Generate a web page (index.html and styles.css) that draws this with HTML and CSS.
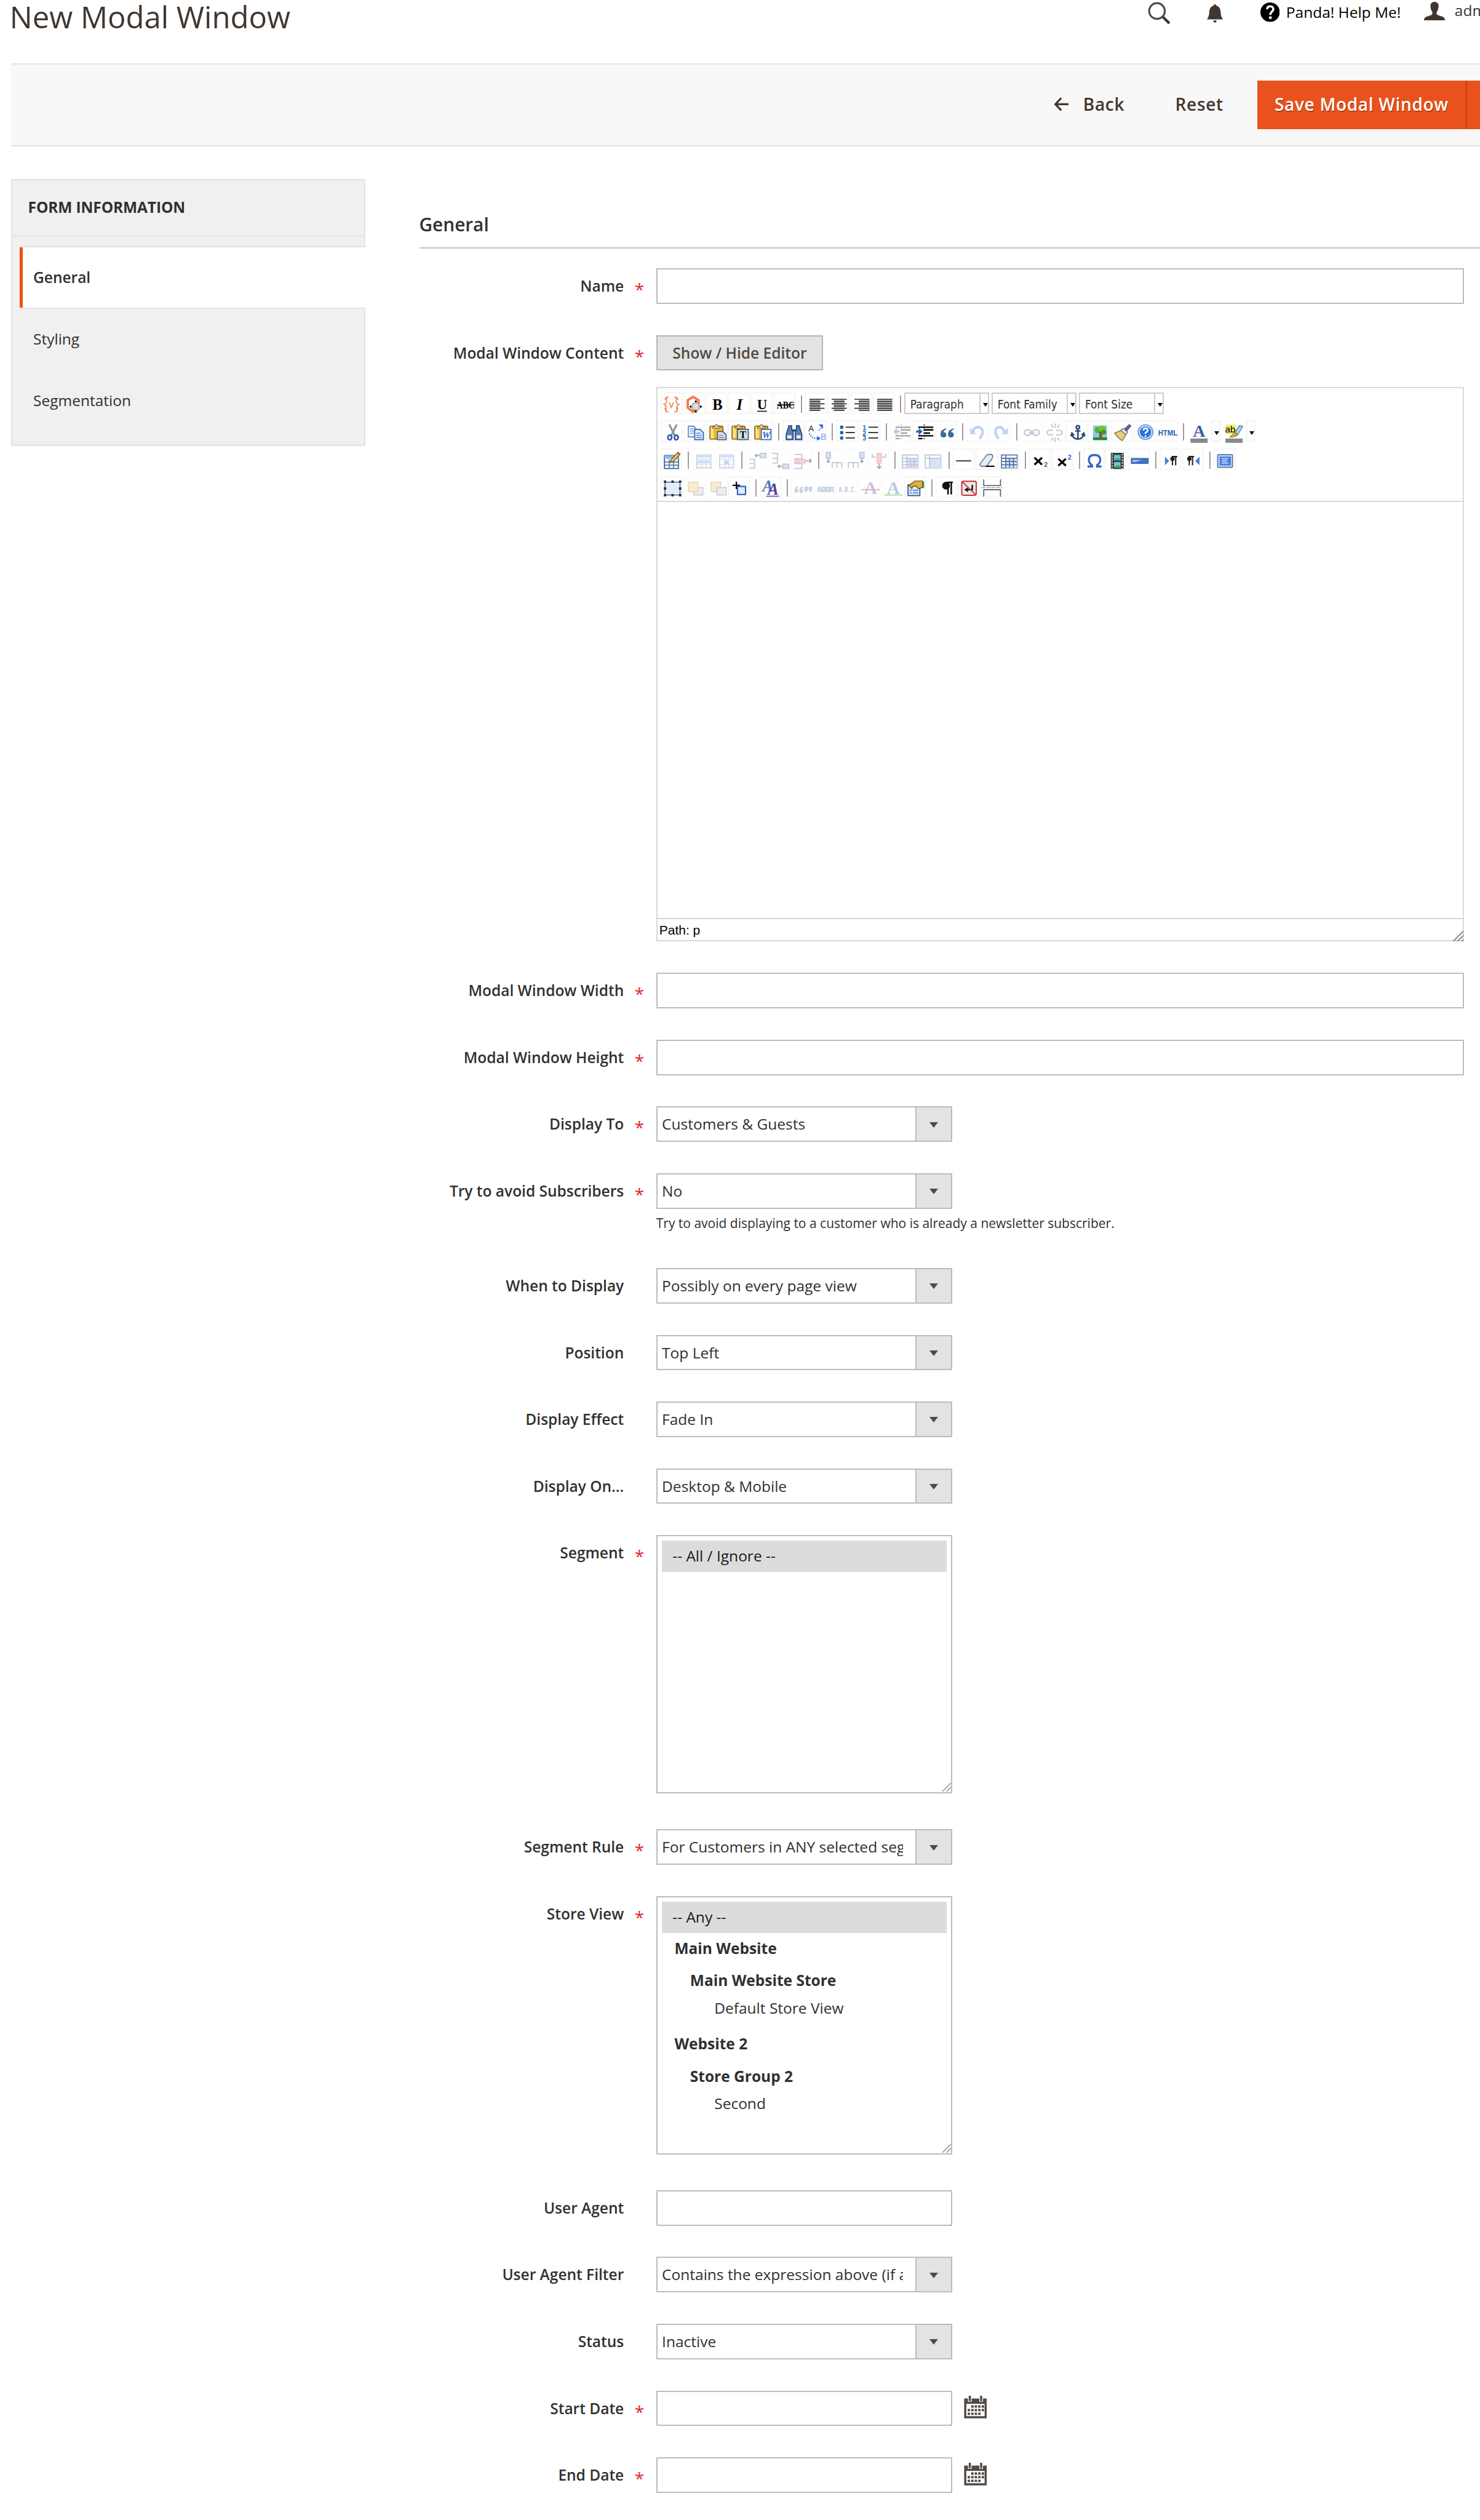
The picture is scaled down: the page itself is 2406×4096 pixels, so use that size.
FILE: index.html
```html
<!DOCTYPE html>
<html lang="en">
<head>
    <meta charset="UTF-8">
    <meta name="viewport" content="width=device-width, initial-scale=1.0">
    <title>New Modal Window</title>
    <link rel="stylesheet" href="styles.css">
</head>
<body>
    <header class="page-header">
        <h1 class="page-title">New Modal Window</h1>
        <div class="header-tools">
            <svg class="ico-search" viewBox="0 0 42 42"><circle cx="17" cy="17" r="14.500" fill="none" stroke="#514943" stroke-width="3.600"/><path d="M28 28l12 12" stroke="#41362f" stroke-width="5"/></svg>
            <svg class="ico-bell" viewBox="0 0 30 34"><path d="M15 0c1.500 0 2.300 1 2.300 2.300C23 4 25 8 25.500 14c.5 7 1.500 10 4.500 14H0c3-4 4-7 4.500-14C5 8 7 4 12.700 2.300 12.700 1 13.500 0 15 0zM12 30h6c0 2-1 4-3 4s-3-2-3-4z" fill="#41362f"/></svg>
            <svg class="ico-help" viewBox="0 0 36 36"><circle cx="18" cy="18" r="18"/><path d="M12.500 12.500C12.500 8.500 15 7 18 7s6 2 6 5.500c0 4.500-5.700 4.500-5.700 10.500" fill="none" stroke="#fff" stroke-width="4"/><rect x="16" y="26" width="5" height="4.500" fill="#fff"/></svg>
            <a class="help-link">Panda! Help Me!</a>
            <svg class="ico-user" viewBox="0 0 39 35"><path d="M19.500 0c5.500 0 8 4 7.500 9-.4 5-2 8-3.500 10v3c0 2 3 3 8 4.500 5 1.500 7.500 3 7.500 8.500H0c0-5.500 2.500-7 7.500-8.500 5-1.500 8-2.500 8-4.500v-3C14 17 12.400 14 12 9c-.5-5 2-9 7.500-9z" fill="#41362f"/></svg>
            <a class="user-link">adm</a>
        </div>
    </header>

    <div class="page-actions">
        <button class="action back" type="button">
            <svg viewBox="0 0 28 26"><path d="M14 1.500L3 13l11 11.500M3 13h25" fill="none" stroke="#41362f" stroke-width="3.600"/></svg>
            <span>Back</span>
        </button>
        <button class="action reset" type="button">Reset</button>
        <button class="action save" type="button">Save Modal Window</button>
        <button class="action toggle" type="button"></button>
    </div>

    <div class="page-columns">
        <nav class="page-nav">
            <strong class="nav-title">FORM INFORMATION</strong>
            <ul class="nav-items">
                <li class="nav-item active">General</li>
                <li class="nav-item">Styling</li>
                <li class="nav-item">Segmentation</li>
            </ul>
        </nav>

        <form class="main-form">
            <h2 class="legend">General</h2>

            <div class="field required">
                <label class="label">Name</label>
                <div class="control"><input class="text wide" type="text"></div>
            </div>

            <div class="field required">
                <label class="label">Modal Window Content</label>
                <div class="control">
                    <button class="toggle-editor" type="button">Show / Hide Editor</button>
                    <div class="editor">
                        <div class="toolbar">
                            <div class="tools">
                                <svg class="btn" viewBox="0 0 20 20"><path d="M7.500 4Q5 4 5.500 7T3 11q2.500 1 2 4t2.500 3M12.500 4q2.500 0 2 3t2.500 4q-2.500 1-2 4t-2.500 3M5 4L4 7M15 4l1 3M4 14l1 4M16 14l-1 4M8 9l2 5 2-5" fill="none" stroke="#f58350" stroke-width="1"/></svg>
                                <svg class="btn" viewBox="0 0 20 20"><path d="M4 14V7l5-3 5 3v7l-5 4z" fill="none" stroke="#f47b50" stroke-width="2.200"/><path d="M8.500 10h6v6h-6z" fill="#ddd" stroke="#888" stroke-width=".6"/><path d="M11.500 7l1.500 2h-3zM11.500 19l1.500-2h-3zM5.500 13l2-1.500v3zM17.500 13l-2-1.500v3z"/></svg>
                                <svg class="btn" viewBox="0 0 20 20"><text x="10.500" y="16" class="serif" font-size="14" font-weight="bold">B</text></svg>
                                <svg class="btn" viewBox="0 0 20 20"><text x="10.500" y="16" class="serif" font-size="14" font-weight="bold" font-style="italic">I</text></svg>
                                <svg class="btn" viewBox="0 0 20 20"><text x="10.300" y="15.500" class="serif" font-size="13" font-weight="bold">U</text><path d="M5.700 17.400h9" stroke="#222"/></svg>
                                <svg class="btn" viewBox="0 0 20 20"><text x="11" y="15" class="serif" font-size="10" font-weight="bold" textLength="16.500" lengthAdjust="spacingAndGlyphs">ABC</text><path d="M3 11.500h16" stroke="#000" stroke-width=".9"/></svg>
                                <i class="sep"></i>
                                <svg class="btn" viewBox="0 0 20 20"><path d="M4 6h10v11H4z" fill="#bbb"/><path d="M4 6.300h14M4 8.400h10M4 10.500h14M4 12.500h10M4 14.600h14M4 16.700h10" stroke="#333" stroke-width=".95"/></svg>
                                <svg class="btn" viewBox="0 0 20 20"><path d="M6 6h10v11H6z" fill="#bbb"/><path d="M4 6.300h14M6 8.400h10M4 10.500h14M6 12.500h10M4 14.600h14M6 16.700h10" stroke="#333" stroke-width=".95"/></svg>
                                <svg class="btn" viewBox="0 0 20 20"><path d="M8 6h10v11H8z" fill="#bbb"/><path d="M4 6.300h14M8 8.400h10M4 10.500h14M8 12.500h10M4 14.600h14M8 16.700h10" stroke="#333" stroke-width=".95"/></svg>
                                <svg class="btn" viewBox="0 0 20 20"><path d="M4 6h14v11H4z" fill="#bbb"/><path d="M4 6.300h14M4 8.400h14M4 10.500h14M4 12.500h14M4 14.600h14M4 16.700h14" stroke="#333" stroke-width=".95"/></svg>
                                <i class="sep"></i>
                                <div class="list">Paragraph</div>
                                <div class="list">Font Family</div>
                                <div class="list">Font Size</div>
                            </div>

                            <div class="tools">
                                <svg class="btn" viewBox="0 0 20 20"><path d="M8 4l5 10M15 4l-5 10" stroke="#8a96a3" stroke-width="1.800"/><ellipse cx="8.500" cy="16" rx="1.800" ry="2.200" fill="none" stroke="#1f56a8" stroke-width="1.400"/><ellipse cx="14.500" cy="16" rx="1.800" ry="2.200" fill="none" stroke="#1f56a8" stroke-width="1.400"/></svg>
                                <svg class="btn" viewBox="0 0 20 20"><path d="M4.500 5.500h5l2 2v8h-7z" fill="#eaf2fc" stroke="#5f86b8" stroke-width=".9"/><path d="M6 8h4M6 10h4M6 12h4" stroke="#8fb2e0"/><path d="M10.500 8.500h5l3 3V18h-8z" fill="#dfeafa" stroke="#3564a8"/><path d="M12 12h4M12 14h5M12 16h5" stroke="#6d9be0"/></svg>
                                <svg class="btn" viewBox="0 0 20 20"><rect x="3.500" y="5.500" width="12" height="12" rx="1" fill="#e8b93a" stroke="#8a6418"/><path d="M4 6h3v11H4z" fill="#fbe27a"/><path d="M6 7.500h7V6h-2q-.5-2-1.500-2T8 6H6z" fill="#ead9a0" stroke="#8a6418" stroke-width=".7"/><path d="M10.500 10.500h5l3 3V18h-8z" fill="#dbe3ea" stroke="#4b5e70"/><path d="M12 14h4M12 16h5" stroke="#8b99a8"/></svg>
                                <svg class="btn" viewBox="0 0 20 20"><rect x="3.500" y="5.500" width="12" height="12" rx="1" fill="#e8b93a" stroke="#8a6418"/><path d="M4 6h3v11H4z" fill="#fbe27a"/><path d="M6 7.500h7V6h-2q-.5-2-1.500-2T8 6H6z" fill="#ead9a0" stroke="#8a6418" stroke-width=".7"/><rect x="8.500" y="8.500" width="10" height="9.500" fill="#d5e0ea" stroke="#4b5e70"/><text x="13.500" y="16.700" class="serif" font-size="9" font-weight="bold">T</text></svg>
                                <svg class="btn" viewBox="0 0 20 20"><rect x="3.500" y="5.500" width="12" height="12" rx="1" fill="#e8b93a" stroke="#8a6418"/><path d="M4 6h3v11H4z" fill="#fbe27a"/><path d="M6 7.500h7V6h-2q-.5-2-1.500-2T8 6H6z" fill="#ead9a0" stroke="#8a6418" stroke-width=".7"/><rect x="9.500" y="8.500" width="9" height="9.500" fill="#fff" stroke="#3d6fb5"/><text x="14" y="16.500" class="serif blue" font-size="8.500" font-weight="bold" font-style="italic">W</text></svg>
                                <i class="sep"></i>
                                <svg class="btn" viewBox="0 0 20 20"><path d="M6 5h2.500v3l1.500 3v7H3.500v-5zM13 5h2.500l2.500 8v5h-6v-7l1-3z" fill="#5b7fb5" stroke="#274a80"/><path d="M4.500 14h4v3h-4zM13 14h4v3h-4z" fill="#e4ecf7"/><path d="M9 9.500h4" stroke="#274a80" stroke-width="2"/></svg>
                                <svg class="btn" viewBox="0 0 20 20"><text x="5.500" y="10" class="sans" font-size="7.500">A</text><text x="17" y="18.500" class="sans" font-size="8" fill="#7d96f0">B</text><path d="M4 12q1 5 8 5" fill="none" stroke="#3a6fe0" stroke-width="1.200" stroke-dasharray="1.200 1"/><path d="M11 14.500l3.500 2.300-3.500 2.200zM12.500 4h4v4z" fill="#2a62e8"/><path d="M15 7l-3 3" stroke="#3a6fe0" stroke-dasharray="1.200 1"/></svg>
                                <i class="sep"></i>
                                <svg class="btn" viewBox="0 0 20 20"><path d="M9 6.500h8.500M9 11.500h8.500M9 16.500h8.500" stroke="#222" stroke-width="1.100"/><g fill="#2b5fa8"><circle cx="5.300" cy="6.500" r="1.600"/><circle cx="5.300" cy="11.500" r="1.600"/><circle cx="5.300" cy="16.500" r="1.600"/></g></svg>
                                <svg class="btn" viewBox="0 0 20 20"><path d="M9 6.500h9M9 11.500h9M9 16.500h9" stroke="#222" stroke-width="1.100"/><g class="sans nums" font-size="6" font-weight="bold"><text x="5.300" y="9">1</text><text x="5.300" y="14">2</text><text x="5.300" y="19">3</text></g></svg>
                                <i class="sep"></i>
                                <svg class="btn dim" viewBox="0 0 20 20"><path d="M5 6.500h14M10 9h9M10 12h6M5 14.500h14M5 17h4" stroke="#000" stroke-width="1.300"/><path d="M10.500 4v15" stroke="#000" stroke-dasharray="1 1.500"/><path d="M3 10.500L6.500 7v2.500H9v2H6.500V14z" fill="#2a62e8"/></svg>
                                <svg class="btn" viewBox="0 0 20 20"><path d="M5 6.500h14M10 9h9M10 12h6M5 14.500h14M5 17h4" stroke="#000" stroke-width="1.300"/><path d="M10.500 4v15" stroke="#000" stroke-dasharray="1 1.500"/><path d="M9 10.500L5.500 7v2.500H3v2h2.500V14z" fill="#2f62b8"/></svg>
                                <svg class="btn" viewBox="0 0 20 20"><path d="M10 7.500Q4.500 8.500 4.500 13q0 3 2.700 3t2.700-2.500q0-2.300-2.500-2.500.2-1.800 2.600-2.500zM17 7.500q-5.500 1-5.500 5.500 0 3 2.700 3t2.700-2.500q0-2.300-2.500-2.500.2-1.800 2.600-2.500z" fill="#41689f"/></svg>
                                <i class="sep"></i>
                                <svg class="btn dim" viewBox="0 0 20 20"><path d="M6 11q1-5 5-4.500 5 .8 4 5.500-.7 3-3 5" fill="none" stroke="#4f7fd8" stroke-width="2.400"/><path d="M3.500 7v6h6z" fill="#4f7fd8"/></svg>
                                <svg class="btn dim" viewBox="0 0 20 20"><path d="M14 11q-1-5-5-4.500-4 .8-3 5.500.7 3 3 5" fill="none" stroke="#4f7fd8" stroke-width="2.400"/><path d="M17.500 7v6h-6z" fill="#4f7fd8"/></svg>
                                <i class="sep"></i>
                                <svg class="btn dim" viewBox="0 0 20 20"><g fill="none" stroke="#55698a" stroke-width="1.400"><rect x="3.500" y="9" width="6.500" height="5" rx="2.500"/><rect x="11" y="9" width="6.500" height="5" rx="2.500"/><path d="M8 11.500h5"/></g></svg>
                                <svg class="btn dim" viewBox="0 0 20 20"><path d="M9 9.500Q3.500 8.500 3.500 11.500T9 13.500M12 9.500q5.500-1 5.500 2t-5.500 2M11 3v4M7.500 4L9 7M15 4l-2 3M11 20v-4M7.500 19L9 16M15 19l-2-3" fill="none" stroke="#55698a" stroke-width="1.200"/></svg>
                                <svg class="btn" viewBox="0 0 20 20"><g fill="none" stroke="#2f4f7c" stroke-width="1.500"><circle cx="11" cy="6.500" r="1.500"/><path d="M11 8v9.500M8.500 10h5M5.500 12.500q.5 5 5.500 5t5.500-5M4.500 15l1-3 2 2M17.500 15l-1-3-2 2"/></g></svg>
                                <svg class="btn" viewBox="0 0 20 20"><rect x="4.500" y="5" width="13" height="13" fill="#8cc4ef"/><path d="M4.500 16h13v2.500h-13z" fill="#1e8a2a"/><path d="M10 17l1-4-3-3 3 1 1-2 .5 3 2.500-2-2 4v3z" fill="#8a5a28"/><circle cx="9" cy="9" r="3" fill="#59b52a"/><circle cx="13" cy="8" r="3.200" fill="#6cc732"/><circle cx="14.500" cy="11" r="2.300" fill="#3f9b22"/><path d="M11 10v7" stroke="#7d4a1c"/></svg>
                                <svg class="btn" viewBox="0 0 20 20"><path d="M3.500 12l6-2.500 4.500 4L10.500 19Q7 17 3.500 12z" fill="#e9cf78" stroke="#8f7330" stroke-width=".8"/><path d="M9 9.500l3-2 3.500 3.500-1.500 2.500z" fill="#ddd" stroke="#667" stroke-width=".7"/><path d="M13 8l4-4 1.500 1.500-4 4.500z" fill="#5b6fc0" stroke="#39457f" stroke-width=".7"/></svg>
                                <svg class="btn" viewBox="0 0 20 20"><circle cx="11" cy="11" r="7" fill="#2f6fe0" stroke="#8fb1e8" stroke-width="1"/><circle cx="11" cy="11" r="5.700" fill="none" stroke="#fff" stroke-width=".8"/><path d="M9 9.500q0-2 2-2t2 1.800q0 1.200-2 2.400v1M11 14v1.400" fill="none" stroke="#fff" stroke-width="1.500"/></svg>
                                <svg class="btn" viewBox="0 0 20 20"><text x="10.500" y="14.500" class="sans blue" font-size="7.500" font-weight="bold" textLength="18" lengthAdjust="spacingAndGlyphs">HTML</text></svg>
                                <i class="sep"></i>
                                <svg class="btn tall" viewBox="0 0 20 23"><text x="11" y="15.500" class="serif" font-size="16" font-weight="bold" fill="#3a5f9c">A</text><path d="M3 17h16v4H3z" fill="#888"/></svg>
                                <span class="drop"></span>
                                <svg class="btn tall" viewBox="0 0 20 23"><path d="M3 4h9.500v9H3z" fill="#f5ec6b"/><text x="7.500" y="11.500" class="sans" font-size="8.500">ab</text><path d="M12 11l4-6 3 1-5 8z" fill="#b9d0ee" stroke="#5476a8" stroke-width=".8"/><path d="M7 15.500l5-4 2 2q-2 2.500-7 2z" fill="#d8bb55" stroke="#7d6a2a" stroke-width=".6"/><path d="M3 17h16v4H3z" fill="#888"/></svg>
                                <span class="drop"></span>
                            </div>

                            <div class="tools">
                                <svg class="btn" viewBox="0 0 20 20"><rect x="3.500" y="6.500" width="13" height="12" fill="#fff" stroke="#3f6299"/><path d="M3.500 6.500h13v3h-13z" fill="#8fb5ee"/><path d="M4 12.500h12M4 15.500h12M8 10v8M12 10v8" stroke="#5b7db0"/><path d="M9 13l1-3 6-6.500 2 2-6 6.500z" fill="#f0c860" stroke="#5a3f1a" stroke-width=".7"/><path d="M15 4.500L16.500 3l2 2-1.500 1.500z" fill="#d9605a"/></svg>
                                <i class="sep"></i>
                                <svg class="btn dim" viewBox="0 0 20 20"><rect x="4.500" y="6" width="13" height="12" fill="#fff" stroke="#5b7db0"/><path d="M4.500 5.500h13v3h-13z" fill="#7da7ea"/><path d="M4.500 11h13v3h-13z" fill="#7da7ea"/><path d="M5 10h12M5 15h12M9 9v9M13 9v9" stroke="#7f99c2" stroke-width=".7"/></svg>
                                <svg class="btn dim" viewBox="0 0 20 20"><rect x="4.500" y="6" width="13" height="12" fill="#fff" stroke="#5b7db0"/><path d="M4.500 5.500h13v3h-13z" fill="#7da7ea"/><path d="M8.500 11h4.500v3.500H8.500z" fill="#4d86e0"/><path d="M5 10h12M5 15h12M9 9v9M13 9v9" stroke="#7f99c2" stroke-width=".7"/></svg>
                                <i class="sep"></i>
                                <svg class="btn dim" viewBox="0 0 20 20"><path d="M3.500 10h5v4h-5M3.500 14h5v4h-5" fill="none" stroke="#4a6288"/><rect x="13.500" y="4.500" width="5.500" height="4" fill="#8fb2ee" stroke="#4a6288"/><path d="M9 6.500h4M10.500 5L9 6.500 10.500 8" fill="none" stroke="#000"/></svg>
                                <svg class="btn dim" viewBox="0 0 20 20"><path d="M3.500 4.500h5v4.500h-5M3.500 9h5v4.500h-5" fill="none" stroke="#4a6288"/><rect x="13.500" y="14.500" width="5.500" height="4" fill="#8fb2ee" stroke="#4a6288"/><path d="M9 16.500h4M10.500 15L9 16.500l1.500 1.500" fill="none" stroke="#000"/></svg>
                                <svg class="btn dim" viewBox="0 0 20 20"><path d="M3 5.500h7v4H3M3 14h7v4.500H3" fill="none" stroke="#4a6288"/><rect x="3.500" y="10" width="10" height="3.500" fill="#f58080" stroke="#d05a5a"/><path d="M14 11.500h4.500M17 9.500l1.800 2-1.800 2" fill="none" stroke="#000"/></svg>
                                <i class="sep"></i>
                                <svg class="btn dim" viewBox="0 0 20 20"><path d="M9 18v-5h4.500v5M13.500 18v-5H18v5" fill="none" stroke="#4a6288"/><rect x="3.500" y="3.500" width="4" height="5.500" fill="#8fb2ee" stroke="#4a6288"/><path d="M5.500 9v4M4 11.500L5.500 13 7 11.500" fill="none" stroke="#000"/></svg>
                                <svg class="btn dim" viewBox="0 0 20 20"><path d="M3 18v-5h4.500v5M7.500 18v-5H12v5" fill="none" stroke="#4a6288"/><rect x="13.500" y="3.500" width="4" height="5.500" fill="#8fb2ee" stroke="#4a6288"/><path d="M15.500 9v4M14 11.500l1.500 1.500 1.500-1.500" fill="none" stroke="#000"/></svg>
                                <svg class="btn dim" viewBox="0 0 20 20"><path d="M4.500 5v3H8M17 5v3h-3.500" fill="none" stroke="#4a6288"/><rect x="9" y="4.500" width="4" height="9" fill="#f58080" stroke="#d05a5a"/><path d="M11 14v4.500M9 16.500l2 2 2-2" fill="none" stroke="#000"/></svg>
                                <i class="sep"></i>
                                <svg class="btn dim" viewBox="0 0 20 20"><rect x="3.500" y="6" width="14.500" height="12" fill="#fff" stroke="#4a6288"/><path d="M7.500 9H18v9H7.500z" fill="#8fb2ee"/><path d="M4 9h14M4 12h14M4 15h14M7.500 6v12M11 9v9M14.500 9v9" stroke="#4a6288"/></svg>
                                <svg class="btn dim" viewBox="0 0 20 20"><rect x="3.500" y="6" width="14.500" height="12" fill="#fff" stroke="#4a6288"/><path d="M7.500 9H18v9H7.500z" fill="#8fb2ee"/><path d="M4 9h14M7.500 6v12" stroke="#4a6288"/></svg>
                                <i class="sep"></i>
                                <svg class="btn" viewBox="0 0 20 20"><path d="M3 11.500h14" stroke="#222"/></svg>
                                <svg class="btn" viewBox="0 0 20 20"><path d="M4 14.500l6-8q.8-1 2-1h3q1.500 1.500.500 3.500L11 15.500q-.7 1-2 1H5.500Q4 16 4 14.500z" fill="#e6ecf4" stroke="#5d7596" stroke-width=".9"/><path d="M9.500 16.500h8" stroke="#000" stroke-width="1.200"/></svg>
                                <svg class="btn" viewBox="0 0 20 20"><rect x="3.500" y="6" width="14.500" height="12" fill="#fff" stroke="#5f7aa5"/><path d="M7.500 9H18v9H7.500z" fill="#dbe7fa"/><path d="M4 9h14M4 12h14M4 15h14M7.500 6v12M11 9v9M14.500 9v9" stroke="#4f6f9f" stroke-width="1"/></svg>
                                <i class="sep"></i>
                                <svg class="btn" viewBox="0 0 20 20"><path d="M5 8.500l7 6.500M12 8.500l-7 6.500" stroke="#000" stroke-width="1.900"/><text x="15.500" y="17" class="sans blue" font-size="6" font-weight="bold">2</text></svg>
                                <svg class="btn" viewBox="0 0 20 20"><path d="M6 9.500l7 6.500M13 9.500L6 16" stroke="#000" stroke-width="1.900"/><text x="16.500" y="10" class="sans blue" font-size="6" font-weight="bold">2</text></svg>
                                <i class="sep"></i>
                                <svg class="btn" viewBox="0 0 20 20"><path d="M4 16.700h4.200v-1.200Q5.200 13.500 5.200 10.500q0-4.500 5.300-4.500t5.300 4.500q0 3-3 5v1.200H17" fill="none" stroke="#3a66c4" stroke-width="1.900"/></svg>
                                <svg class="btn" viewBox="0 0 20 20"><rect x="5" y="4" width="12" height="15" fill="#3a3a3a"/><path d="M8 6h6v5H8zM8 12.500h6v5H8z" fill="#6ec3f0"/><path d="M8 11q3-4 6-1v1zM8 17.500q3-4 6-1v1z" fill="#4cb04a"/><path d="M6.300 5v14M15.700 5v14" stroke="#ddd" stroke-width="1.200" stroke-dasharray="1.300 1.300"/></svg>
                                <svg class="btn" viewBox="0 0 20 20"><rect x="3" y="9.300" width="15.500" height="4.500" fill="#3a70d8" stroke="#4d6a98"/><path d="M4 10.500l9 0-6 2H4z" fill="#9dc0f5"/></svg>
                                <i class="sep"></i>
                                <svg class="btn" viewBox="0 0 20 20"><path d="M5 7.500l4 4-4 4z" fill="#4f7fd0"/><path d="M12 15.500v-8h4.500M15 7.500v8" fill="none" stroke="#222" stroke-width="1.200"/><circle cx="12" cy="9.500" r="2" fill="#222"/></svg>
                                <svg class="btn" viewBox="0 0 20 20"><path d="M16 7.500l-4 4 4 4z" fill="#4f7fd0"/><path d="M6.500 15.500v-8H11M9.500 7.500v8" fill="none" stroke="#222" stroke-width="1.200"/><circle cx="6.500" cy="9.500" r="2" fill="#222"/></svg>
                                <i class="sep"></i>
                                <svg class="btn" viewBox="0 0 20 20"><rect x="3.700" y="5.700" width="13.800" height="11.800" rx="1" fill="#c3d4f0" stroke="#5a78ab"/><rect x="5.500" y="7.500" width="10.500" height="8.300" fill="#4a80e2"/><path d="M7.500 9.500h6M7.500 11.500h5M7.500 13.500h6" stroke="#cfe0fb"/></svg>
                            </div>

                            <div class="tools">
                                <svg class="btn" viewBox="0 0 20 20"><rect x="4" y="5.500" width="14" height="12" fill="#e6edf7" stroke="#4a5f80" stroke-width=".8"/><path d="M3 4h2.200v2.200H3zM10 4h2.200v2.200H10zM17 4h2.200v2.200H17zM3 10.300h2.200v2.200H3zM17 10.300h2.200v2.200H17zM3 16.500h2.200v2.200H3zM10 16.500h2.200v2.200H10zM17 16.500h2.200v2.200H17z" fill="#14304f"/></svg>
                                <svg class="btn dim" viewBox="0 0 20 20"><rect x="9.500" y="10.500" width="8.500" height="7" fill="#ccc" stroke="#777"/><rect x="4.500" y="5.500" width="9" height="9" fill="#f3c872" stroke="#a98c50" stroke-width=".8"/></svg>
                                <svg class="btn dim" viewBox="0 0 20 20"><rect x="4.500" y="5.500" width="9" height="9" fill="#f3c872" stroke="#a98c50" stroke-width=".8"/><rect x="10" y="10.500" width="8.500" height="7" fill="#ccc" stroke="#777"/></svg>
                                <svg class="btn" viewBox="0 0 20 20"><path d="M4 8.500h7M7.500 5v7" stroke="#000" stroke-width="1.200"/><rect x="8.500" y="9.500" width="7.500" height="7.500" fill="#dfe9fa" stroke="#2f5fb8" stroke-width="1.200"/></svg>
                                <i class="sep"></i>
                                <svg class="btn" viewBox="0 0 20 20"><text x="7.500" y="14" class="serif" font-size="15" font-weight="bold" font-style="italic" fill="#4a7cc0">A</text><text x="12.500" y="17" class="serif" font-size="15" font-weight="bold" font-style="italic" fill="#563a9c">A</text><path d="M6 18.600h12" stroke="#8d68cc" stroke-width="1.200"/></svg>
                                <i class="sep"></i>
                                <svg class="btn dim" viewBox="0 0 20 20"><path d="M6 10q-2.500 1-2 4.500h2v-2H5M10.500 10Q8 11 8.500 14.500h2v-2h-1M13 14.500q2.500-1 2-4h-2v2h1.500M17 14.500q2.500-1 2-4h-2v2h1.500" fill="none" stroke="#41689f" stroke-width="1.200"/></svg>
                                <svg class="btn dim" viewBox="0 0 20 20"><text x="11" y="15" class="mono" font-size="7.500" textLength="16">ABBR</text></svg>
                                <svg class="btn dim" viewBox="0 0 20 20"><text x="11" y="15" class="mono" font-size="7.500" textLength="17" lengthAdjust="spacingAndGlyphs">A.B.C.</text></svg>
                                <svg class="btn dim" viewBox="0 0 20 20"><text x="11" y="16.500" class="serif" font-size="17" font-weight="bold" fill="#41689f">A</text><path d="M2.500 12.500h17" stroke="#e00" stroke-width="1.100"/></svg>
                                <svg class="btn dim" viewBox="0 0 20 20"><text x="11" y="16.500" class="serif" font-size="17" font-weight="bold" fill="#41689f">A</text><path d="M2.500 17.500h17" stroke="#0a0" stroke-width="1.100"/></svg>
                                <svg class="btn" viewBox="0 0 20 20"><rect x="3.500" y="8" width="11" height="10" fill="#dbe8fa" stroke="#2f5590"/><path d="M5 13h2M8 13h5M5 15.500h2M8 15.500h5" stroke="#5b82c0"/><path d="M4.500 8.500L10 4.500h7v6l-4 1-2-2.500-3 .5-1 2z" fill="#e0b040" stroke="#6b4c12" stroke-width=".8"/><path d="M17 5h1.500v6H17z" fill="#3c9a4c"/></svg>
                                <i class="sep"></i>
                                <svg class="btn" viewBox="0 0 20 20"><path d="M11.500 17V5.700h4.500M14.500 5.700V17" fill="none" stroke="#111" stroke-width="1.500"/><circle cx="9.700" cy="8.800" r="3.600" fill="#111"/></svg>
                                <svg class="btn" viewBox="0 0 20 20"><rect x="3.700" y="4.700" width="13.500" height="13" rx="1.500" fill="#e8e8e8" stroke="#c9303a" stroke-width="1.100"/><path d="M13.500 8v4.500H9" fill="none" stroke="#111" stroke-width="1.300"/><path d="M9.500 10.300l-3.500 2.200 3.500 2.200z" fill="#111"/><path d="M4 5l13 12.500" stroke="#d8303a" stroke-width="1"/></svg>
                                <svg class="btn" viewBox="0 0 20 20"><path d="M3 3v5.700h15.500V3M3 19v-6.500h15.500V19" fill="none" stroke="#55575e" stroke-width=".9"/><path d="M1 10.600h19" stroke="#7ea3cc" stroke-width=".9" stroke-dasharray="3.500 1"/></svg>
                            </div>
                        </div>
                        <div class="edit-area"></div>
                        <div class="path-row">Path: p
                            <svg class="grip" viewBox="0 0 20 20"><path d="M0 20L20 0M8 20L20 8M16 20l4-4" stroke="#888" stroke-width="2.400"/></svg>
                        </div>
                    </div>
                </div>
            </div>

            <div class="field required">
                <label class="label">Modal Window Width</label>
                <div class="control"><input class="text wide" type="text"></div>
            </div>

            <div class="field required">
                <label class="label">Modal Window Height</label>
                <div class="control"><input class="text wide" type="text"></div>
            </div>

            <div class="field required">
                <label class="label">Display To</label>
                <div class="control"><div class="select"><span>Customers &amp; Guests</span></div></div>
            </div>

            <div class="field required">
                <label class="label">Try to avoid Subscribers</label>
                <div class="control">
                    <div class="select"><span>No</span></div>
                    <div class="note">Try to avoid displaying to a customer who is already a newsletter subscriber.</div>
                </div>
            </div>

            <div class="field">
                <label class="label">When to Display</label>
                <div class="control"><div class="select"><span>Possibly on every page view</span></div></div>
            </div>

            <div class="field">
                <label class="label">Position</label>
                <div class="control"><div class="select"><span>Top Left</span></div></div>
            </div>

            <div class="field">
                <label class="label">Display Effect</label>
                <div class="control"><div class="select"><span>Fade In</span></div></div>
            </div>

            <div class="field">
                <label class="label">Display On...</label>
                <div class="control"><div class="select"><span>Desktop &amp; Mobile</span></div></div>
            </div>

            <div class="field multi required">
                <label class="label">Segment</label>
                <div class="control">
                    <div class="multiselect">
                        <div class="option selected">-- All / Ignore --</div>
                        <svg class="grip small" viewBox="0 0 16 16"><path d="M0 16L16 0M8 16l8-8" stroke="#888" stroke-width="1.600"/></svg>
                    </div>
                </div>
            </div>

            <div class="field required">
                <label class="label">Segment Rule</label>
                <div class="control"><div class="select"><span>For Customers in ANY selected seg</span></div></div>
            </div>

            <div class="field multi required">
                <label class="label">Store View</label>
                <div class="control">
                    <div class="multiselect">
                        <div class="option selected">-- Any --</div>
                        <div class="option website">Main Website</div>
                        <div class="option group">Main Website Store</div>
                        <div class="option store">Default Store View</div>
                        <div class="option website next">Website 2</div>
                        <div class="option group">Store Group 2</div>
                        <div class="option store">Second</div>
                        <svg class="grip small" viewBox="0 0 16 16"><path d="M0 16L16 0M8 16l8-8" stroke="#888" stroke-width="1.600"/></svg>
                    </div>
                </div>
            </div>

            <div class="field">
                <label class="label">User Agent</label>
                <div class="control"><input class="text" type="text"></div>
            </div>

            <div class="field">
                <label class="label">User Agent Filter</label>
                <div class="control"><div class="select"><span>Contains the expression above (if any)</span></div></div>
            </div>

            <div class="field">
                <label class="label">Status</label>
                <div class="control"><div class="select"><span>Inactive</span></div></div>
            </div>

            <div class="field required">
                <label class="label">Start Date</label>
                <div class="control date">
                    <input class="text" type="text">
                    <svg class="ico-cal" viewBox="0 0 42 42"><path d="M0 5h42v37H0z" fill="#514943"/><path d="M4 15h34v23H4z" fill="#fff"/><path d="M10.500 0v11M31.500 0v11" stroke="#fff" stroke-width="7"/><path d="M10.500 0v10M31.500 0v10" stroke="#514943" stroke-width="4"/><path d="M13 20h24M6.500 26.700h30.500M6.500 33.500h24.500" stroke="#514943" stroke-width="4.400" stroke-dasharray="4.500 2"/></svg>
                </div>
            </div>

            <div class="field required">
                <label class="label">End Date</label>
                <div class="control date">
                    <input class="text" type="text">
                    <svg class="ico-cal" viewBox="0 0 42 42"><path d="M0 5h42v37H0z" fill="#514943"/><path d="M4 15h34v23H4z" fill="#fff"/><path d="M10.500 0v11M31.500 0v11" stroke="#fff" stroke-width="7"/><path d="M10.500 0v10M31.500 0v10" stroke="#514943" stroke-width="4"/><path d="M13 20h24M6.500 26.700h30.500M6.500 33.500h24.500" stroke="#514943" stroke-width="4.400" stroke-dasharray="4.500 2"/></svg>
                </div>
            </div>
        </form>
    </div>
</body>
</html>
```

FILE: styles.css
```css
*, *::before, *::after {
  box-sizing: border-box;
}

html {
  font-size: 17.511px;
}

body {
  margin: 0;
  height: 4096px;
  overflow: hidden;
  background-color: #ffffff;
  color: #303030;
  font-family: "Open Sans", "Noto Sans", sans-serif;
  font-size: 1.4rem;
}

h1, h2, ul {
  margin: 0;
  padding: 0;
  list-style: none;
}

svg {
  display: block;
  flex: none;
}

/* header */
.page-header {
  display: flex;
  justify-content: space-between;
  height: 5.9rem;
}

.page-title {
  padding-left: 0.9rem;
  font-size: 2.8rem;
  font-weight: 400;
  line-height: 3.1rem;
  color: #41362f;
}

.header-tools {
  display: flex;
  align-items: flex-start;
  width: 30.85rem;
  white-space: nowrap;
}

.ico-search {
  width: 2.1rem;
  height: 2.1rem;
  margin: 0.15rem 3.4rem 0 0;
}

.ico-bell {
  width: 1.5rem;
  height: 1.7rem;
  margin: 0.4rem 3.45rem 0 0;
}

.ico-help {
  width: 1.8rem;
  height: 1.8rem;
  margin: 0.25rem 0.6rem 0 0;
}

.help-link {
  width: 12.8rem;
  flex: none;
  line-height: 2.3rem;
  color: #000000;
}

.ico-user {
  width: 1.95rem;
  height: 1.75rem;
  margin: 0.15rem 0.9rem 0 0;
}

.user-link {
  line-height: 1.95rem;
  color: #41362f;
}

/* action bar */
.page-actions {
  display: flex;
  justify-content: flex-end;
  align-items: center;
  height: 7.7rem;
  margin-left: 1.02rem;
  background-color: #f8f8f8;
  border-top: 2px solid #e3e3e3;
  border-bottom: 2px solid #e3e3e3;
}

.action {
  display: flex;
  align-items: center;
  height: 4.5rem;
  padding: 0 0 0.17rem;
  border: none;
  background: none;
  font-family: inherit;
  font-size: 1.6rem;
  font-weight: 600;
  letter-spacing: 0.025em;
  color: #41362f;
  white-space: nowrap;
}

.action.back {
  width: 11.3rem;
}

.action.back svg {
  width: 1.4rem;
  height: 1.3rem;
  margin-right: 1.35rem;
}

.action.reset {
  width: 7.6rem;
}

.action.save {
  width: 19.4rem;
  padding-left: 1.62rem;
  background-color: #e9521c;
  color: #ffffff;
  text-shadow: 1px 2px 0 rgba(0, 0, 0, 0.25);
}

.action.toggle {
  width: 1.3rem;
  background-color: #e9521c;
  border-left: 2px solid #b8471f;
}

/* columns */
.page-columns {
  display: flex;
  align-items: flex-start;
  padding: 3rem 0 0 1.02rem;
}

.page-nav {
  width: 32.9rem;
  height: 24.8rem;
  margin-right: 5rem;
  background-color: #f0f0f0;
  border: 2px solid #e3e3e3;
}

.nav-title {
  display: block;
  height: 5.3rem;
  padding-left: 1.47rem;
  border-bottom: 2px solid #e3e3e3;
  font-size: 1.4rem;
  font-weight: 700;
  letter-spacing: -0.005em;
  line-height: 5.05rem;
}

.nav-items {
  padding-top: 0.9rem;
}

.nav-item {
  padding-left: 1.95rem;
  line-height: 5.7rem;
}

.nav-item.active {
  margin: -1px -2px -1px 0.7rem;
  padding-left: 1.25rem;
  background-color: #ffffff;
  border-top: 2px solid #e3e3e3;
  border-bottom: 2px solid #e3e3e3;
  box-shadow: inset 5px 0 0 #eb5202;
  font-weight: 600;
  line-height: 5.6rem;
}

/* form */
.main-form {
  flex: 1;
}

.legend {
  height: 6.5rem;
  padding-top: 3rem;
  margin-bottom: 1.8rem;
  border-bottom: 2px solid #cac3b4;
  font-size: 1.7rem;
  font-weight: 600;
  line-height: 2.5rem;
}

.field {
  display: flex;
  align-items: flex-start;
  margin-bottom: 2.9rem;
}

.field.multi {
  margin-bottom: 3.3rem;
}

.label {
  display: flex;
  justify-content: flex-end;
  width: 22rem;
  flex: none;
  font-weight: 600;
  line-height: 3.3rem;
  white-space: nowrap;
}

.label::after {
  content: "";
  width: 3rem;
  padding-left: 1rem;
}

.required .label::after {
  content: "*";
  height: 3.3rem;
  font-size: 1.6rem;
  font-weight: 500;
  line-height: 3.9rem;
  color: #e22626;
}

.control {
  width: 75rem;
}

.control.date {
  display: flex;
}

.text {
  display: block;
  width: 27.5rem;
  height: 3.3rem;
  border: 2px solid #bcbcbc;
  border-radius: 1px;
  background-color: #ffffff;
}

.text.wide {
  width: 75rem;
}

.ico-cal {
  width: 2.15rem;
  height: 2.1rem;
  margin: 0.5rem 0 0 1.05rem;
}

.toggle-editor {
  display: block;
  width: 15.5rem;
  height: 3.3rem;
  padding: 0;
  border: 2px solid #b5b5b5;
  background-color: #e3e3e3;
  font-family: inherit;
  font-size: 1.4rem;
  font-weight: 600;
  color: #514943;
}

.select {
  position: relative;
  width: 27.5rem;
  height: 3.3rem;
  padding: 0 4.45rem 0 0.42rem;
  border: 2px solid #bcbcbc;
  border-radius: 1px;
  line-height: 3.1rem;
}

.select span {
  display: block;
  overflow: hidden;
  white-space: nowrap;
}

.select::before {
  content: "";
  position: absolute;
  top: 0;
  right: 0;
  bottom: 0;
  width: 3.35rem;
  background-color: #e3e3e3;
  border-left: 2px solid #bcbcbc;
}

.select::after {
  content: "";
  position: absolute;
  top: 1.33rem;
  right: 1.22rem;
  border: 0.4rem solid transparent;
  border-top: 0.55rem solid #514943;
  border-bottom: none;
}

.note {
  padding: 0.55rem 0 0.45rem;
  font-size: 1.2rem;
  line-height: 1.6rem;
}

/* multiselects */
.multiselect {
  position: relative;
  width: 27.5rem;
  height: 24rem;
  padding: 0.4rem;
  border: 2px solid #bcbcbc;
  border-radius: 1px;
}

.option {
  padding-left: 1rem;
  line-height: 2.9rem;
}

.option.selected {
  background-color: #dcdcdc;
  color: #1a1a1a;
}

.option.website {
  padding-left: 1.18rem;
  font-weight: 700;
}

.option.next {
  margin-top: 1rem;
}

.option.group {
  padding-left: 2.63rem;
  font-weight: 700;
  line-height: 3.1rem;
}

.option.store {
  padding-left: 4.88rem;
  line-height: 1.9rem;
}

.grip {
  position: absolute;
  right: -1px;
  bottom: -2px;
  width: 1rem;
  height: 1rem;
}

.grip.small {
  right: 0;
  bottom: 1px;
  width: 0.8rem;
  height: 0.8rem;
}

/* wysiwyg editor */
.editor {
  display: flex;
  flex-direction: column;
  height: 51.5rem;
  margin-top: 1.5rem;
  border: 2px solid #d8d8d8;
}

.toolbar {
  display: flex;
  flex-direction: column;
  gap: 0.6rem;
  height: 10.6rem;
  padding: 0.4rem 0 0 0.3rem;
  border-bottom: 2px solid #d8d8d8;
}

.tools {
  display: flex;
  gap: 0.1rem;
  height: 2rem;
}

.btn {
  width: 2rem;
  height: 2rem;
  overflow: visible;
  box-shadow: inset 0 0 0 1.5px #f3f3f1;
}

.btn.tall {
  height: 2.3rem;
  box-shadow: none;
}

.btn.dim {
  opacity: 0.35;
}

.btn text {
  text-anchor: middle;
}

.serif {
  font-family: "Liberation Serif", serif;
}

.sans {
  font-family: "Liberation Sans", sans-serif;
}

.mono {
  font-family: "Liberation Mono", monospace;
  font-weight: bold;
  fill: #41689f;
}

.blue, .nums {
  fill: #2f5fb8;
}

.sep {
  width: 2px;
  height: 1.6rem;
  margin: 0.3rem 0.19rem 0 0.4rem;
  background-color: #a59a9f;
}

.list {
  position: relative;
  width: 7.9rem;
  height: 2rem;
  margin-right: 0.12rem;
  padding-left: 0.45rem;
  border: 2px solid #ccc;
  font-family: "DejaVu Sans Condensed", "Noto Sans", sans-serif;
  font-size: 1.08rem;
  line-height: 1.95rem;
  white-space: nowrap;
}

.list::before {
  content: "";
  position: absolute;
  top: 0;
  right: 0;
  bottom: 0;
  width: 0.8rem;
  border-left: 2px solid #ccc;
}

.list::after, .drop::after {
  content: "";
  position: absolute;
  top: 0.9rem;
  right: 0;
  border: 0.27rem solid transparent;
  border-top: 0.35rem solid #000;
  border-bottom: none;
}

.drop {
  position: relative;
  width: 0.85rem;
  height: 2rem;
  margin: 0 0.1rem;
  border: 2px solid #f3f3f1;
}

.edit-area {
  flex: 1;
}

.path-row {
  position: relative;
  height: 2.1rem;
  padding-left: 0.17rem;
  border-top: 2px solid #d8d8d8;
  font-family: "Liberation Sans", Arial, sans-serif;
  font-size: 1.2rem;
  line-height: 2.05rem;
  color: #000000;
}
```
